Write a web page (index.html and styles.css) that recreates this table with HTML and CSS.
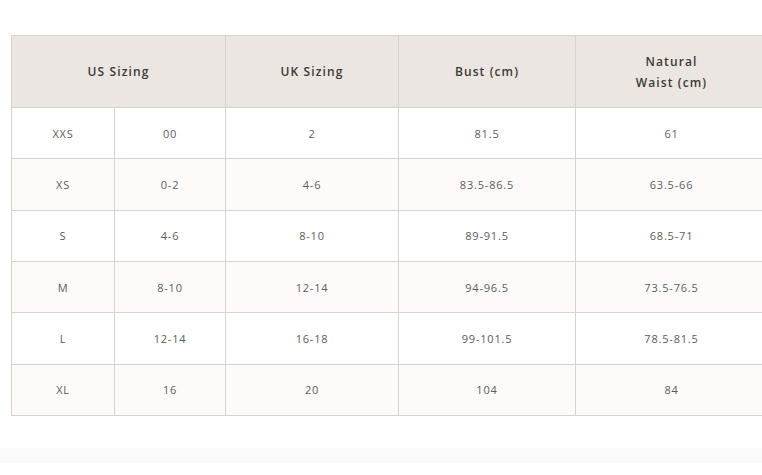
FILE: index.html
```html
<!DOCTYPE html>
<html lang="en">
<head>
<meta charset="utf-8">
<title>Size Chart</title>
<link rel="stylesheet" href="styles.css">
</head>
<body>
<main class="page">
  <div class="table-wrap">
    <table class="size-table">
      <colgroup>
        <col class="c1"><col class="c2"><col class="c3"><col class="c4"><col class="c5">
      </colgroup>
      <thead>
        <tr>
          <th colspan="2">US Sizing</th>
          <th>UK Sizing</th>
          <th>Bust (cm)</th>
          <th>Natural<br>Waist (cm)</th>
        </tr>
      </thead>
      <tbody>
        <tr><td>XXS</td><td>00</td><td>2</td><td>81.5</td><td>61</td></tr>
        <tr class="alt"><td>XS</td><td>0-2</td><td>4-6</td><td>83.5-86.5</td><td>63.5-66</td></tr>
        <tr><td>S</td><td>4-6</td><td>8-10</td><td>89-91.5</td><td>68.5-71</td></tr>
        <tr class="alt"><td>M</td><td>8-10</td><td>12-14</td><td>94-96.5</td><td>73.5-76.5</td></tr>
        <tr><td>L</td><td>12-14</td><td>16-18</td><td>99-101.5</td><td>78.5-81.5</td></tr>
        <tr class="alt"><td>XL</td><td>16</td><td>20</td><td>104</td><td>84</td></tr>
      </tbody>
    </table>
  </div>
  <div class="band"></div>
</main>
</body>
</html>
```
FILE: styles.css
```css
html, body {
  margin: 0;
  padding: 0;
  background: #ffffff;
  overflow: hidden;
  width: 762px;
  height: 475px;
}
.page {
  display: flex;
  flex-direction: column;
  padding-top: 35px;
}
.table-wrap {
  margin-left: 11px;
  width: 751px;
  overflow: hidden;
}
.size-table {
  border-collapse: collapse;
  table-layout: fixed;
  width: 756px;
  font-family: "Open Sans", "Liberation Sans", sans-serif;
  color: #555;
}
.c1 { width: 103px; }
.c2 { width: 111px; }
.c3 { width: 173px; }
.c4 { width: 177px; }
.c5 { width: 192px; }
.size-table th,
.size-table td {
  border: 1px solid #d6d2ce;
  text-align: center;
  padding: 0;
}
.size-table th {
  background: #ebe6e1;
  height: 71px;
  font-size: 12px;
  font-weight: 600;
  letter-spacing: 1.1px;
  line-height: 21px;
  color: #3c3a38;
}
.size-table td {
  height: 50.34px;
  font-size: 11px;
  letter-spacing: 0.8px;
  color: #5c5c5c;
}
.size-table tr.alt td {
  background: #fdfaf9;
}
.band {
  margin-top: 32px;
  height: 15px;
  background: #fafafa;
}
```
